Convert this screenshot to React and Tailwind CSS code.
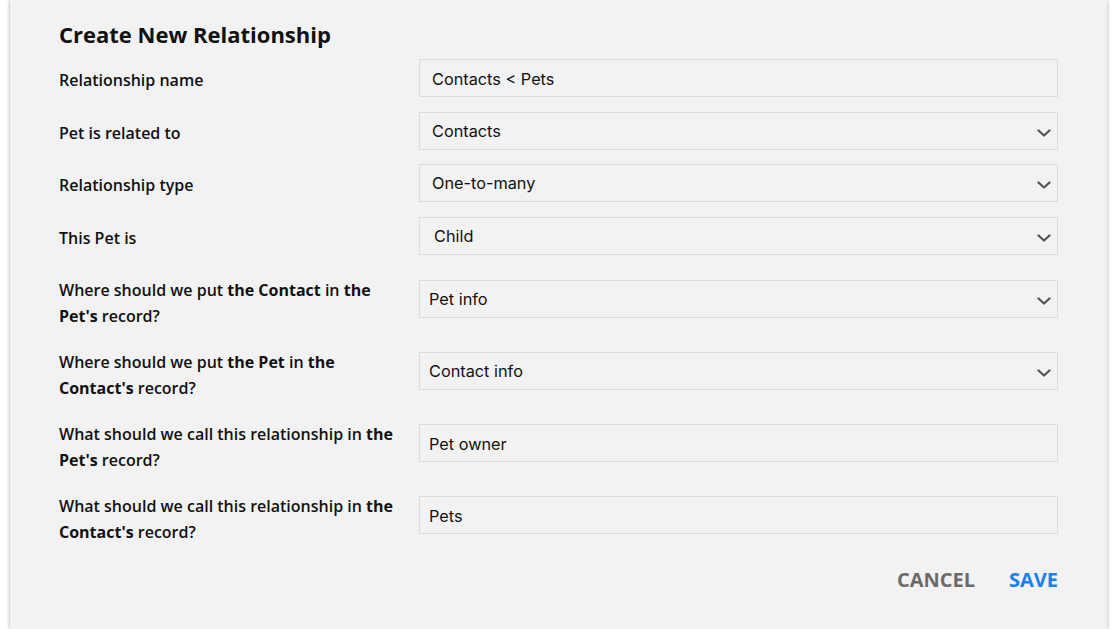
const label = "font-['Open_Sans',sans-serif] text-[16px] leading-[26px] font-semibold text-[#111]"
const field =
  "h-[38px] w-[639px] shrink-0 border border-[#dcdcdc] bg-[#f2f2f2] font-['Inter',sans-serif] text-[16.3px] text-[#111] flex items-center"

function Input({ value, pl = 'pl-[12px]' }) {
  return (
    <div className={`${field} ${pl}`}>
      <span className="pt-[3px]">{value}</span>
    </div>
  )
}

function Select({ value, pl = 'pl-[12px]' }) {
  return (
    <div className={`${field} ${pl} justify-between pr-[6px]`}>
      <span>{value}</span>
      <svg width="14" height="8" viewBox="0 0 14 8" className="mt-[3px] text-[#555]">
        <polyline
          points="1.5,1.5 7,6.5 12.5,1.5"
          fill="none"
          stroke="currentColor"
          strokeWidth="2.3"
          strokeLinecap="round"
          strokeLinejoin="round"
        />
      </svg>
    </div>
  )
}

function Row({ children, control, className = '' }) {
  return (
    <div className={`flex items-center ${className}`}>
      <div className={`${label} w-[360px] shrink-0 pt-[3px]`}>{children}</div>
      {control}
    </div>
  )
}

function TallRow({ children, control, className = '' }) {
  return (
    <div className={`flex items-start ${className}`}>
      <div className={`${label} w-[360px] shrink-0`}>{children}</div>
      <div className="mt-[3px]">{control}</div>
    </div>
  )
}

export default function App() {
  return (
    <div className="min-h-screen bg-white">
      <div className="ml-[10px] w-[1097px] min-h-[629px] bg-[#f2f2f2] shadow-[0_0_4px_rgba(0,0,0,0.35)] px-[49px] pt-[18px]">
        <h1 className="font-['Open_Sans',sans-serif] text-[22px] font-bold text-[#111] leading-[32px]">
          Create New Relationship
        </h1>
        <Row className="mt-[9px]" control={<Input value="Contacts < Pets" />}>
          Relationship name
        </Row>
        <Row className="mt-[15px]" control={<Select value="Contacts" />}>
          Pet is related to
        </Row>
        <Row className="mt-[14px]" control={<Select value="One-to-many" />}>
          Relationship type
        </Row>
        <Row className="mt-[15px]" control={<Select value="Child" pl="pl-[14px]" />}>
          This Pet is
        </Row>
        <TallRow className="mt-[22px]" control={<Select value="Pet info" pl="pl-[9px]" />}>
          Where should we put <b className="font-bold">the Contact</b> in <b className="font-bold">the</b>
          <br />
          <b className="font-bold">Pet's</b> record?
        </TallRow>
        <TallRow className="mt-[20px]" control={<Select value="Contact info" pl="pl-[9px]" />}>
          Where should we put <b className="font-bold">the Pet</b> in <b className="font-bold">the</b>
          <br />
          <b className="font-bold">Contact's</b> record?
        </TallRow>
        <TallRow className="mt-[20px]" control={<Input value="Pet owner" pl="pl-[9px]" />}>
          What should we call this relationship in <b className="font-bold">the</b>
          <br />
          <b className="font-bold">Pet's</b> record?
        </TallRow>
        <TallRow className="mt-[20px]" control={<Input value="Pets" pl="pl-[9px]" />}>
          What should we call this relationship in <b className="font-bold">the</b>
          <br />
          <b className="font-bold">Contact's</b> record?
        </TallRow>
        <div className="mt-[22px] flex justify-end gap-[34px] font-['Open_Sans',sans-serif] text-[20px] font-bold leading-[26px]">
          <button className="text-[#6b6b6b]">CANCEL</button>
          <button className="text-[#1a7ff0]">SAVE</button>
        </div>
      </div>
    </div>
  )
}
